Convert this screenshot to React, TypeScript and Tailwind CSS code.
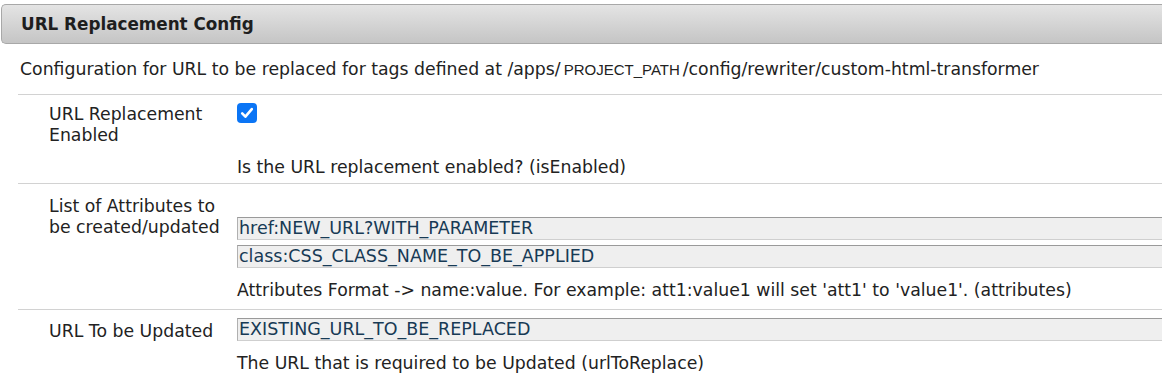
import React from 'react';

const font = { fontFamily: '"DejaVu Sans", Verdana, sans-serif' };

function Field({ value }: { value: string }) {
  return (
    <div className="flex h-[23px] items-center border-t border-l border-b border-t-[#9a9a9a] border-l-[#b0b0b0] border-b-[#cfcfcf] bg-[#efefef] pl-px text-[17.5px] leading-none text-[#173a55]">
      {value}
    </div>
  );
}

function Checked() {
  return (
    <div className="flex size-5 items-center justify-center rounded-[4px] bg-[#0b75f5]">
      <svg viewBox="0 0 20 20" className="size-5" fill="none">
        <path d="M5.2 10.4l3.2 3.3 6.4-7.6" stroke="#fff" strokeWidth="2.6" strokeLinecap="round" strokeLinejoin="round" />
      </svg>
    </div>
  );
}

export default function App() {
  return (
    <div className="h-[380px] w-[1162px] overflow-hidden bg-white text-[17.3px] leading-[21px] text-[#222]" style={font}>
      <div className="mt-[4px] ml-px flex h-[40px] items-center rounded-l-[5px] border border-r-0 border-[#a8a8a8] bg-gradient-to-b from-[#e4e4e4] to-[#c5c5c5] pl-[19px] text-[16.8px] font-bold text-[#1e1e1e]">
        URL Replacement Config
      </div>

      <div className="flex h-[50px] items-center pl-[20px] whitespace-nowrap">
        Configuration for URL to be replaced for tags defined at /apps/
        <span className="mx-[3px] text-[15px]" style={{ fontFamily: '"Liberation Sans", Arial, sans-serif' }}>
          PROJECT_PATH
        </span>
        /config/rewriter/custom-html-transformer
      </div>

      <div className="ml-[18px] border-t border-[#d2d2d2]">
        {/* row 1 */}
        <div className="grid grid-cols-[219px_1fr] border-b border-[#d2d2d2]">
          <div className="pt-[9px] pl-[31px]">
            URL Replacement
            <br />
            Enabled
          </div>
          <div className="pt-[8px] pb-[5px]">
            <Checked />
            <div className="mt-[34px]">Is the URL replacement enabled? (isEnabled)</div>
          </div>
        </div>

        {/* row 2 */}
        <div className="grid grid-cols-[219px_1fr] border-b border-[#d2d2d2]">
          <div className="pt-[12px] pl-[31px]">
            List of Attributes to
            <br />
            be created/updated
          </div>
          <div className="pt-[33px] pb-[8px]">
            <div className="flex flex-col gap-[5px]">
              <Field value="href:NEW_URL?WITH_PARAMETER" />
              <Field value="class:CSS_CLASS_NAME_TO_BE_APPLIED" />
            </div>
            <div className="mt-[12px] whitespace-nowrap">
              Attributes Format -&gt; name:value. For example: att1:value1 will set 'att1' to 'value1'. (attributes)
            </div>
          </div>
        </div>

        {/* row 3 */}
        <div className="grid grid-cols-[219px_1fr]">
          <div className="pt-[11px] pl-[31px]">URL To be Updated</div>
          <div className="pt-[8px]">
            <Field value="EXISTING_URL_TO_BE_REPLACED" />
            <div className="mt-[12px]">The URL that is required to be Updated (urlToReplace)</div>
          </div>
        </div>
      </div>
    </div>
  );
}
